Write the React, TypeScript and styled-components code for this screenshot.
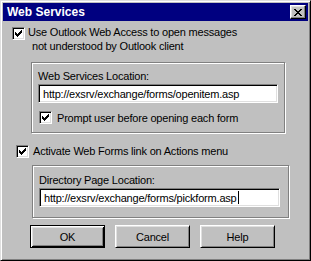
import React, { FC } from 'react';
import styled, { createGlobalStyle } from 'styled-components';

const GlobalStyle = createGlobalStyle`
  html, body {
    margin: 0;
    padding: 0;
    background: #c0c0c0;
  }
  body {
    font-family: "Liberation Sans", Arial, sans-serif;
    font-size: 11px;
    letter-spacing: -0.2px;
    color: #000;
  }
`;

const Window = styled.div`
  width: 311px;
  height: 261px;
  box-sizing: border-box;
  background: #c0c0c0;
  border: 1px solid;
  border-color: #dfdfdf #000 #000 #dfdfdf;
  box-shadow: inset 1px 1px #fff, inset -1px -1px #808080;
  padding: 2px;
  display: flex;
  flex-direction: column;
`;

const TitleBar = styled.div`
  height: 18px;
  background: #000080;
  display: flex;
  align-items: center;
  justify-content: space-between;
  padding: 0 2px 0 4px;
`;

const Title = styled.span`
  color: #fff;
  font-weight: bold;
  font-size: 12px;
  letter-spacing: 0;
`;

const CloseButton = styled.div`
  width: 16px;
  height: 14px;
  box-sizing: border-box;
  background: #c0c0c0;
  border: 1px solid;
  border-color: #fff #000 #000 #fff;
  box-shadow: inset -1px -1px #808080, inset 1px 1px #dfdfdf;
  display: flex;
  align-items: center;
  justify-content: center;
`;

const Content = styled.div`
  display: flex;
  flex-direction: column;
  align-items: flex-start;
`;

const CheckRow = styled.div<{ $left: number; $top: number; $gap: number }>`
  display: flex;
  align-items: flex-start;
  gap: ${(p) => p.$gap}px;
  margin-left: ${(p) => p.$left}px;
  margin-top: ${(p) => p.$top}px;
  line-height: 14px;
`;

const Box = styled.div<{ $offset: number }>`
  width: 13px;
  height: 13px;
  box-sizing: border-box;
  flex: none;
  margin-top: ${(p) => p.$offset}px;
  background: #fff;
  border: 1px solid;
  border-color: #808080 #fff #fff #808080;
  box-shadow: inset 1px 1px #000, inset -1px -1px #dfdfdf;
  display: flex;
  align-items: center;
  justify-content: center;
`;

const LabelText = styled.div`
  display: flex;
  flex-direction: column;
`;

const Indented = styled.span`
  padding-left: 4px;
`;

const Group = styled.div<{ $left: number; $top: number; $width: number; $height: number; $padTop: number }>`
  box-sizing: border-box;
  margin-left: ${(p) => p.$left}px;
  margin-top: ${(p) => p.$top}px;
  width: ${(p) => p.$width}px;
  height: ${(p) => p.$height}px;
  border: 1px solid #808080;
  box-shadow: inset 1px 1px #fff, 1px 1px #fff;
  padding: ${(p) => p.$padTop}px 0 0 6px;
  display: flex;
  flex-direction: column;
  align-items: flex-start;
`;

const FieldLabel = styled.div`
  line-height: 14px;
`;

const Field = styled.div<{ $width: number }>`
  box-sizing: border-box;
  width: ${(p) => p.$width}px;
  height: 19px;
  margin-top: 1px;
  background: #fff;
  border: 1px solid;
  border-color: #808080 #fff #fff #808080;
  box-shadow: inset 1px 1px #000, inset -1px -1px #dfdfdf;
  padding: 0 4px;
  display: flex;
  align-items: center;
  white-space: nowrap;
`;

const Caret = styled.span`
  display: inline-block;
  width: 1px;
  height: 13px;
  background: #000;
  margin-left: 1px;
`;

const ButtonRow = styled.div`
  display: flex;
  gap: 10px;
  margin-left: 27px;
  margin-top: 7px;
`;

const Button = styled.div<{ $default?: boolean }>`
  width: 75px;
  height: 23px;
  box-sizing: border-box;
  display: flex;
  align-items: center;
  justify-content: center;
  background: #c0c0c0;
  border: 1px solid ${(p) => (p.$default ? '#000' : 'transparent')};
  border-color: ${(p) => (p.$default ? '#000' : '#fff #000 #000 #fff')};
  box-shadow: ${(p) =>
    p.$default
      ? 'inset 1px 1px #fff, inset -1px -1px #000, inset 2px 2px #dfdfdf, inset -2px -2px #808080'
      : 'inset 1px 1px #dfdfdf, inset -1px -1px #808080'};
`;

const Check: FC = () => (
  <svg width="7" height="7" viewBox="0 0 7 7" shapeRendering="crispEdges">
    <path
      d="M6 0h1v3h-1zM5 1h1v3h-1zM4 2h1v3h-1zM3 3h1v3h-1zM2 4h1v3h-1zM1 3h1v3h-1zM0 2h1v3h-1z"
      fill="#000"
    />
  </svg>
);

const CloseIcon: FC = () => (
  <svg width="8" height="7" viewBox="0 0 8 7" shapeRendering="crispEdges">
    <path
      d="M0 0h2v1h-2zM6 0h2v1h-2zM1 1h2v1h-2zM5 1h2v1h-2zM2 2h4v1h-4zM3 3h2v1h-2zM2 4h4v1h-4zM1 5h2v1h-2zM5 5h2v1h-2zM0 6h2v1h-2zM6 6h2v1h-2z"
      fill="#000"
    />
  </svg>
);

const App: FC = () => {
  return (
    <>
      <GlobalStyle />
      <Window>
        <TitleBar>
          <Title>Web Services</Title>
          <CloseButton>
            <CloseIcon />
          </CloseButton>
        </TitleBar>
        <Content>
          <CheckRow $left={9} $top={4} $gap={3}>
            <Box $offset={2}>
              <Check />
            </Box>
            <LabelText>
              <span>Use Outlook Web Access to open messages</span>
              <Indented>not understood by Outlook client</Indented>
            </LabelText>
          </CheckRow>

          <Group $left={28} $top={9} $width={254} $height={71} $padTop={6}>
            <FieldLabel>Web Services Location:</FieldLabel>
            <Field $width={240}>http://exsrv/exchange/forms/openitem.asp</Field>
            <CheckRow $left={1} $top={8} $gap={5}>
              <Box $offset={0}>
                <Check />
              </Box>
              <span>Prompt user before opening each form</span>
            </CheckRow>
          </Group>

          <CheckRow $left={13} $top={11} $gap={4}>
            <Box $offset={1}>
              <Check />
            </Box>
            <span>Activate Web Forms link on Actions menu</span>
          </CheckRow>

          <Group $left={29} $top={7} $width={257} $height={53} $padTop={7}>
            <FieldLabel>Directory Page Location:</FieldLabel>
            <Field $width={241}>
              http://exsrv/exchange/forms/pickform.asp
              <Caret />
            </Field>
          </Group>

          <ButtonRow>
            <Button $default>OK</Button>
            <Button>Cancel</Button>
            <Button>Help</Button>
          </ButtonRow>
        </Content>
      </Window>
    </>
  );
};

export default App;
